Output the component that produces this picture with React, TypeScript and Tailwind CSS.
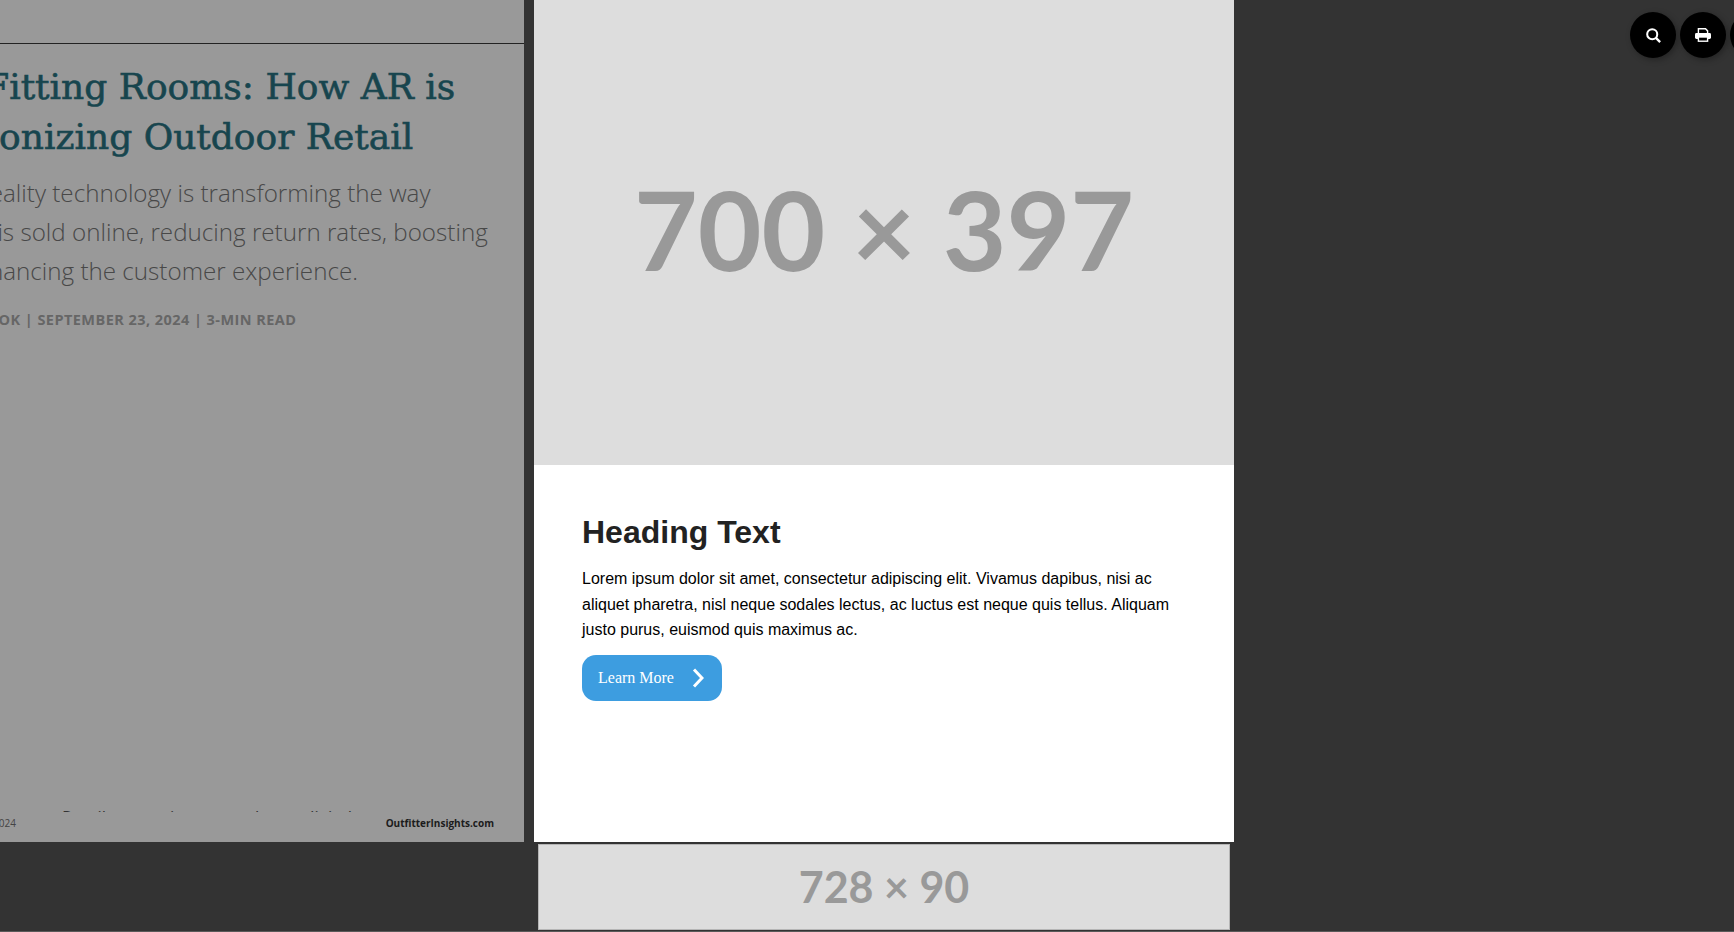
const openSans = "font-['Open_Sans',sans-serif]";

function LeftPage() {
  return (
    <div className="w-[524px] h-[842px] shrink-0 bg-[#999999] overflow-hidden flex flex-col">
      <div className="h-[44px] shrink-0 border-b border-[#222222]" />
      <div className="flex-1 min-h-0 -ml-[152px] w-[676px] flex flex-col">
        <h1 className="mt-[18px] text-[36px] leading-[50px] text-[#17454e] [-webkit-text-stroke:0.6px_#17454e] font-['DejaVu_Serif',serif] whitespace-nowrap">
          Virtual Fitting Rooms: How AR is
          <br />
          Revolutionizing Outdoor Retail
        </h1>
        <p className={`mt-[11px] text-[24.2px] leading-[39px] font-light text-[#484848] whitespace-nowrap ${openSans}`}>
          Augmented reality technology is transforming the way
          <br />
          outdoor gear is sold online, reducing return rates, boosting
          <br />
          sales, and enhancing the customer experience.
        </p>
        <p className={`mt-[20px] ml-[12px] text-[14.5px] leading-[20px] font-bold tracking-[0.45px] text-[#666666] whitespace-nowrap ${openSans}`}>
          BY ALEX WESTBROOK | SEPTEMBER 23, 2024 | 3-MIN READ
        </p>
        <div className="flex-1" />
        <div className={`h-[4px] overflow-hidden pl-[214px] text-[17px] leading-[26px] text-[#333333] whitespace-nowrap ${openSans}`}>
          <div className="-mt-[4px]">Retailers continue to embrace digital</div>
        </div>
        <div className={`h-[30px] pb-[8px] flex items-center justify-between pl-[91px] pr-[30px] text-[10px] ${openSans}`}>
          <span className="text-[#444444]">September 2024</span>
          <span className="font-bold text-[#1c1c1c]">OutfitterInsights.com</span>
        </div>
      </div>
    </div>
  );
}

function CenterColumn() {
  return (
    <div className="w-[700px] shrink-0 flex flex-col items-center">
      <div className="w-full h-[842px] bg-white flex flex-col">
        <div className="h-[465px] bg-[#dddddd] flex items-center justify-center pb-[10px]">
          <span className="text-[110px] leading-none font-bold text-[#999999] font-['Lato',sans-serif]">700 × 397</span>
        </div>
        <div className="pt-[48px] pl-[48px] pr-[48px]">
          <h2 className="text-[32px] leading-[38px] font-bold text-[#222222] font-['Liberation_Sans',sans-serif]">Heading Text</h2>
          <p className="mt-[15px] text-[16px] leading-[25.5px] text-black font-['Liberation_Sans',sans-serif] whitespace-nowrap">
            Lorem ipsum dolor sit amet, consectetur adipiscing elit. Vivamus dapibus, nisi ac
            <br />
            aliquet pharetra, nisl neque sodales lectus, ac luctus est neque quis tellus. Aliquam
            <br />
            justo purus, euismod quis maximus ac.
          </p>
          <button className="mt-[12px] w-[140px] h-[46px] rounded-[14px] bg-[#3d9de0] text-white flex items-center pl-[16px] text-[16px] font-['Liberation_Serif',serif]">
            <span>Learn More</span>
            <svg viewBox="0 0 12 20" className="ml-[18px] w-[12px] h-[20px]" fill="none" stroke="currentColor" strokeWidth="3">
              <polyline points="2,1.5 10,10 2,18.5" />
            </svg>
          </button>
        </div>
      </div>
      <div className="mt-[2px] w-[692px] h-[86px] bg-[#dddddd] border border-[#b5b5b5] flex items-center justify-center">
        <span className="text-[43px] leading-none font-bold text-[#999999] font-['Lato',sans-serif] -mt-[2px]">728 × 90</span>
      </div>
    </div>
  );
}

function RoundButton({ children }: { children?: React.ReactNode }) {
  return (
    <button className="w-[46px] h-[46px] shrink-0 rounded-full bg-black text-white flex items-center justify-center shadow-[2px_2px_6px_rgba(0,0,0,0.3)]">
      {children}
    </button>
  );
}

export default function App() {
  return (
    <div className="relative w-[1734px] h-[932px] bg-[#333333] border-b border-[#5a5a5a] overflow-hidden flex gap-[10px]">
      <LeftPage />
      <CenterColumn />
      <div className="absolute top-[12px] left-[1630px] flex gap-[4px]">
        <RoundButton>
          <svg viewBox="0 0 14 14" className="w-[15px] h-[15px]" fill="none" stroke="currentColor">
            <circle cx="5.8" cy="5.8" r="4.7" strokeWidth="1.9" />
            <line x1="9.2" y1="9.2" x2="13.2" y2="13.2" strokeWidth="2.1" />
          </svg>
        </RoundButton>
        <RoundButton>
          <svg viewBox="0 0 16 14" className="w-[16px] h-[14px]">
            <path d="M3.4 5.5V0.8H10.5L12.6 2.9V5.5" fill="none" stroke="currentColor" strokeWidth="1.4" />
            <rect x="0" y="5" width="16" height="6" rx="1.4" fill="currentColor" />
            <rect x="3.4" y="9" width="9.2" height="4.2" fill="#000" stroke="currentColor" strokeWidth="1.4" />
          </svg>
        </RoundButton>
        <RoundButton />
      </div>
    </div>
  );
}
